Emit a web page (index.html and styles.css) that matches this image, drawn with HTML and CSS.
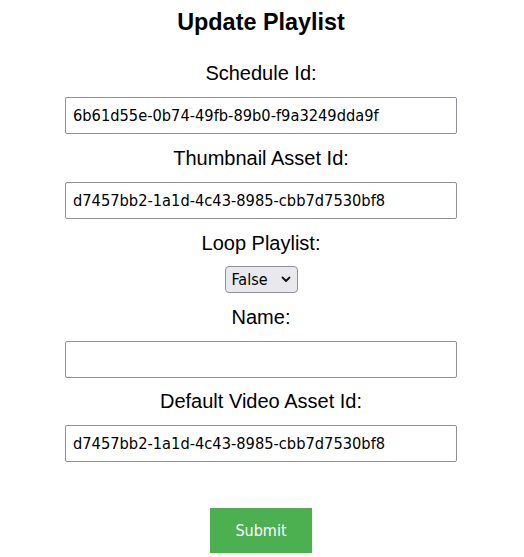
FILE: index.html
```html
<!DOCTYPE html>
<html>
<head>
<meta charset="utf-8">
<link rel="stylesheet" href="styles.css">
</head>
<body>
<form class="form">
  <h2 class="title">Update Playlist</h2>
  <label class="label">Schedule Id:</label>
  <input class="field" type="text" value="6b61d55e-0b74-49fb-89b0-f9a3249dda9f">
  <label class="label">Thumbnail Asset Id:</label>
  <input class="field" type="text" value="d7457bb2-1a1d-4c43-8985-cbb7d7530bf8">
  <label class="label label-loop">Loop Playlist:</label>
  <div class="select">False <svg class="chev" width="10" height="7" viewBox="0 0 10 7"><path d="M1.5 1.5 L5 5 L8.5 1.5" fill="none" stroke="#111" stroke-width="1.8" stroke-linecap="round" stroke-linejoin="round"/></svg></div>
  <label class="label">Name:</label>
  <input class="field field-name" type="text" value="">
  <label class="label">Default Video Asset Id:</label>
  <input class="field" type="text" value="d7457bb2-1a1d-4c43-8985-cbb7d7530bf8">
  <button class="submit" type="button">Submit</button>
</form>
</body>
</html>
```
FILE: styles.css
```css
html, body {
  margin: 0;
  padding: 0;
  background: #fff;
}
body {
  padding: 8px;
  font-family: "Liberation Sans", Arial, sans-serif;
  color: #000;
}
.form {
  display: flex;
  flex-direction: column;
  align-items: center;
  padding-right: 2px;
}
.title {
  margin: 0 0 26px 0;
  font-size: 23.4px;
  line-height: 28px;
  font-weight: bold;
}
.label {
  display: block;
  font-size: 20px;
  line-height: 23px;
  margin-bottom: 12px;
}
.label-loop {
  margin-bottom: 11px;
}
.field {
  box-sizing: border-box;
  width: 392px;
  height: 37px;
  margin: 0 0 13px 0;
  padding: 0 7px;
  border: 1px solid #8f8f9d;
  border-radius: 2px;
  font-family: "DejaVu Sans Condensed", "DejaVu Sans", Tahoma, sans-serif;
  font-stretch: condensed;
  font-size: 16.3px;
  color: #000;
  background: #fff;
  outline: none;
}
.field-name {
  margin-bottom: 12px;
}
.select {
  box-sizing: border-box;
  width: 73px;
  height: 27px;
  margin-bottom: 13px;
  padding: 0 6px 0 6px;
  display: flex;
  align-items: center;
  justify-content: space-between;
  border: 1px solid #8f8f9d;
  border-radius: 4px;
  background: #e9e9ed;
  font-family: "DejaVu Sans Condensed", "DejaVu Sans", Tahoma, sans-serif;
  font-stretch: condensed;
  font-size: 16px;
  color: #000;
}
.chev {
  display: block;
}
.submit {
  margin-top: 33px;
  width: 102px;
  height: 45px;
  border: none;
  border-radius: 0;
  background: #4caf50;
  color: #fff;
  font-family: "DejaVu Sans Condensed", "DejaVu Sans", Tahoma, sans-serif;
  font-stretch: condensed;
  font-size: 16px;
  padding: 0;
}
```
